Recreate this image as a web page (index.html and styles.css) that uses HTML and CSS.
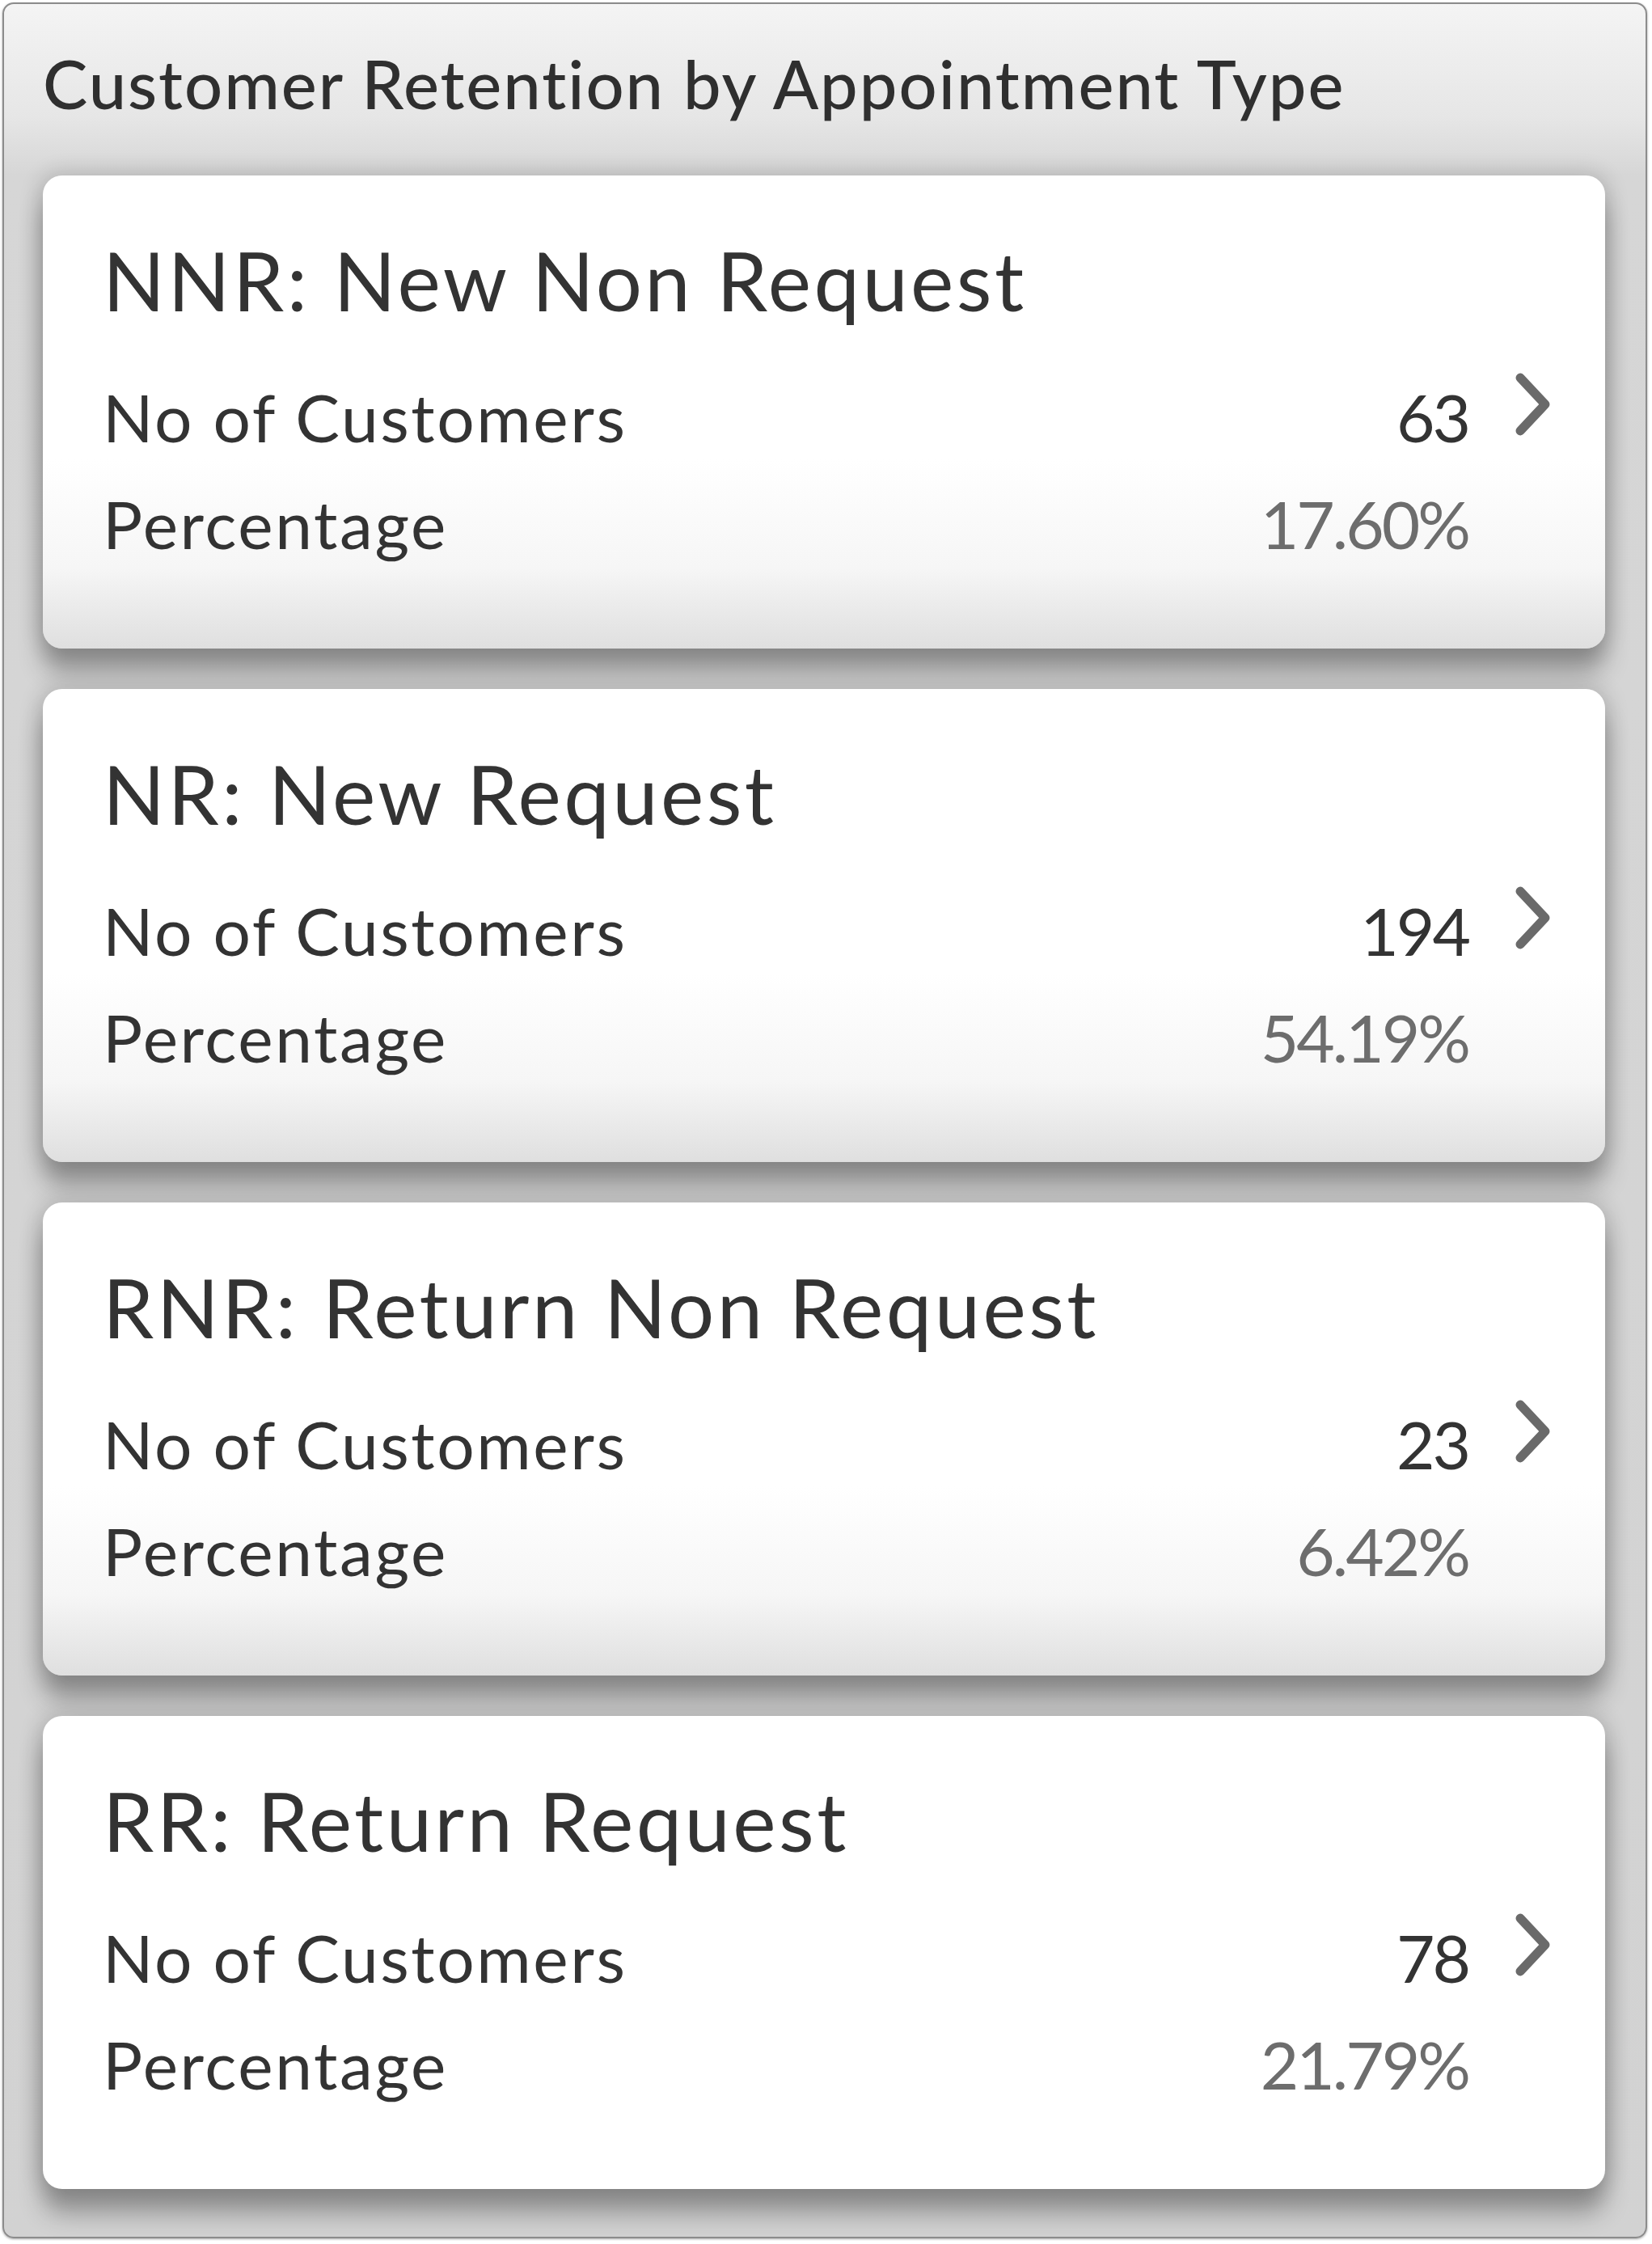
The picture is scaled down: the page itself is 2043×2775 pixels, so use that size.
FILE: index.html
```html
<!DOCTYPE html>
<html lang="en">
<head>
  <meta charset="UTF-8" />
  <meta name="viewport" content="width=device-width, initial-scale=1.0" />
  <title>Customer Retention by Appointment Type</title>
  <link rel="stylesheet" href="styles.css">
</head>
<body>
  <div class="panel">
    <h2 class="panel-title">Customer Retention by Appointment Type</h2>
    <div class="card-list">
      <div class="card">
        <div class="card-body">
          <div class="card-title">NNR: New Non Request</div>
          <div class="stat-row"><span>No of Customers</span><span class="count">63</span></div>
          <div class="stat-row"><span>Percentage</span><span class="pct">17.60%</span></div>
        </div>
        <svg class="chevron" viewBox="0 0 42 76"><path d="M6 6 L36 38 L6 70" /></svg>
      </div>
      <div class="card">
        <div class="card-body">
          <div class="card-title">NR: New Request</div>
          <div class="stat-row"><span>No of Customers</span><span class="count">194</span></div>
          <div class="stat-row"><span>Percentage</span><span class="pct">54.19%</span></div>
        </div>
        <svg class="chevron" viewBox="0 0 42 76"><path d="M6 6 L36 38 L6 70" /></svg>
      </div>
      <div class="card">
        <div class="card-body">
          <div class="card-title">RNR: Return Non Request</div>
          <div class="stat-row"><span>No of Customers</span><span class="count">23</span></div>
          <div class="stat-row"><span>Percentage</span><span class="pct">6.42%</span></div>
        </div>
        <svg class="chevron" viewBox="0 0 42 76"><path d="M6 6 L36 38 L6 70" /></svg>
      </div>
      <div class="card">
        <div class="card-body">
          <div class="card-title">RR: Return Request</div>
          <div class="stat-row"><span>No of Customers</span><span class="count">78</span></div>
          <div class="stat-row"><span>Percentage</span><span class="pct">21.79%</span></div>
        </div>
        <svg class="chevron" viewBox="0 0 42 76"><path d="M6 6 L36 38 L6 70" /></svg>
      </div>
    </div>
  </div>
</body>
</html>
```

FILE: styles.css
```css
* {
  box-sizing: border-box;
}
body {
  margin: 0;
  padding: 3px;
  background: #fff;
  font-family: 'Lato', 'Liberation Sans', sans-serif;
  color: #333;
}
.panel {
  width: 2034px;
  border: 2px solid #8c8c8c;
  border-radius: 14px;
  padding: 48px 50px 59px 48px;
  background: linear-gradient(to bottom, #f4f4f4 0, #e6e6e6 140px, #d6d6d6 212px, #d2d2d2 100%);
  box-shadow: 0 1px 3px rgba(0, 0, 0, 0.35);
  overflow: hidden;
}
.panel-title {
  margin: 0 0 64px 0;
  font-size: 83px;
  font-weight: 500;
  line-height: 100px;
  letter-spacing: 2px;
  color: #2f2f2f;
}
.card-list {
  display: flex;
  flex-direction: column;
  gap: 50px;
}
.card {
  display: flex;
  align-items: center;
  height: 585px;
  padding: 69px 68px 89px 74px;
  border-radius: 24px;
  background: linear-gradient(to bottom, #fff 60%, #f6f6f6 83%, #dfdfdf 100%);
  box-shadow: 0 0 24px 6px rgba(0, 0, 0, 0.14), 0 30px 30px 0 rgba(0, 0, 0, 0.3);
}
.card:last-child {
  background: #fff;
}
.card-body {
  flex: 1;
}
.card-title {
  font-size: 101px;
  line-height: 120px;
  letter-spacing: 3.4px;
  margin-bottom: 43px;
  color: #333;
}
.stat-row {
  display: flex;
  justify-content: space-between;
  font-size: 82px;
  line-height: 132px;
  letter-spacing: 2.6px;
}
.count,
.pct {
  letter-spacing: -3px;
}
.count {
  color: #333;
}
.pct {
  color: #6d6d6d;
}
.chevron {
  width: 43px;
  height: 78px;
  margin-left: 58px;
  fill: none;
  stroke: #6a6a6a;
  stroke-width: 11;
  stroke-linecap: round;
  stroke-linejoin: round;
}
```
